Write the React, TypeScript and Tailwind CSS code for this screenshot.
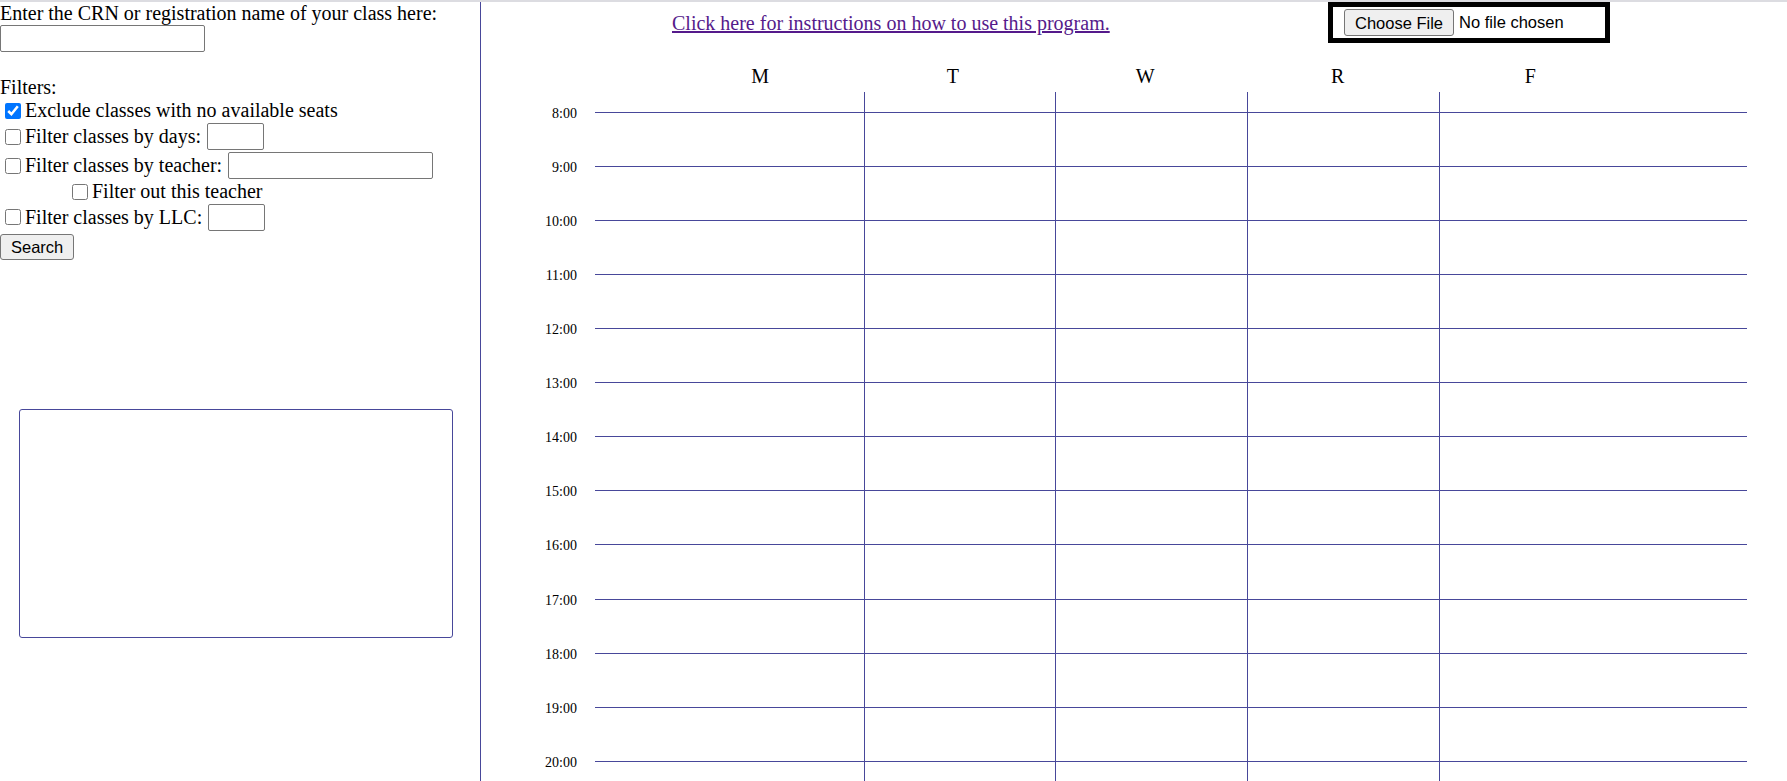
const days = ["M", "T", "W", "R", "F"];
const hours = ["8:00", "9:00", "10:00", "11:00", "12:00", "13:00", "14:00", "15:00", "16:00", "17:00", "18:00", "19:00", "20:00"];
const colW = ["w-[269px]", "w-[191px]", "w-[192px]", "w-[192px]", "w-[308px]"];

function GridRow({ label, h, top }: { label?: string; h: string; top: boolean }) {
  return (
    <div className={`flex ${h}`}>
      <div className="w-[114px] pr-[18px] flex justify-end">
        {label && <span className="text-[14px] leading-[16px] -mt-[6px] h-[16px]">{label}</span>}
      </div>
      {colW.map((w, i) => (
        <div
          key={i}
          className={`${w} ${top ? "border-t border-[#48489a]" : ""} ${i > 0 ? "border-l border-[#48489a]" : ""}`}
        />
      ))}
    </div>
  );
}

function Check({ checked = false, className = "" }: { checked?: boolean; className?: string }) {
  return <input type="checkbox" defaultChecked={checked} className={`w-[16px] h-[16px] mr-[4px] ${className}`} />;
}

export default function App() {
  return (
    <div className="h-[781px] overflow-hidden bg-white text-black font-['Liberation_Serif',serif] text-[20px]">
      <div className="h-[2px] bg-[#dcdce1]" />
      <div className="flex h-[779px]">
        <div className="w-[481px] shrink-0 border-r border-[#48489a] flex flex-col">
          <div className="h-[23px] leading-[23px]">Enter the CRN or registration name of your class here:</div>
          <input type="text" className="w-[205px] h-[27px] border border-[#767676] rounded-[2px] bg-white" />
          <div className="mt-[24px] h-[23px] leading-[23px]">Filters:</div>
          <div className="flex items-center h-[23px] pl-[5px]">
            <Check checked />
            <span className="leading-[23px]">Exclude classes with no available seats</span>
          </div>
          <div className="flex items-center h-[29px] pl-[5px]">
            <Check />
            <span className="leading-[23px]">Filter classes by days:</span>
            <input type="text" className="ml-[6px] w-[57px] h-[27px] border border-[#767676] rounded-[2px]" />
          </div>
          <div className="flex items-center h-[29px] pl-[5px]">
            <Check />
            <span className="leading-[23px]">Filter classes by teacher:</span>
            <input type="text" className="ml-[6px] w-[205px] h-[27px] border border-[#767676] rounded-[2px]" />
          </div>
          <div className="flex items-center h-[23px] pl-[72px]">
            <Check />
            <span className="leading-[23px]">Filter out this teacher</span>
          </div>
          <div className="flex items-center h-[28px] pl-[5px]">
            <Check />
            <span className="leading-[23px]">Filter classes by LLC:</span>
            <input type="text" className="ml-[6px] w-[57px] h-[27px] border border-[#767676] rounded-[2px]" />
          </div>
          <div>
            <button className="h-[26px] px-[10px] bg-[#efefef] border border-[#767676] rounded-[3px] font-['Liberation_Sans',Arial,sans-serif] text-[16.5px] leading-[20px]">
              Search
            </button>
          </div>
          <div className="mt-[148px] ml-[19px] w-[434px] h-[229px] border border-[#48489a] rounded-[3px]" />
        </div>

        <div className="flex-1 flex flex-col">
          <div className="flex h-[41px] pl-[191px]">
            <div className="w-[656px] pt-[6px]">
              <a href="#" className="text-[#551a8b] underline decoration-[1.5px] leading-[23px]">
                Click here for instructions on how to use this program.
              </a>
            </div>
            <div className="w-[282px] h-[41px] border-[5px] border-black flex items-center pl-[11px] font-['Liberation_Sans',Arial,sans-serif] text-[16.5px]">
              <button className="h-[27px] px-[10px] bg-[#efefef] border border-[#767676] rounded-[3px] leading-[20px]">
                Choose File
              </button>
              <span className="ml-[5px]">No file chosen</span>
            </div>
          </div>
          <div className="flex mt-[22px] pl-[183px] h-[23px] leading-[23px]">
            {days.map((d) => (
              <div key={d} className="w-[192.5px] text-center">{d}</div>
            ))}
          </div>
          <div className="mt-[4px] flex flex-col">
            <GridRow h="h-[19.7px]" top={false} />
            {hours.map((t) => (
              <GridRow key={t} label={t} h="h-[54.1px]" top />
            ))}
          </div>
        </div>
      </div>
    </div>
  );
}
